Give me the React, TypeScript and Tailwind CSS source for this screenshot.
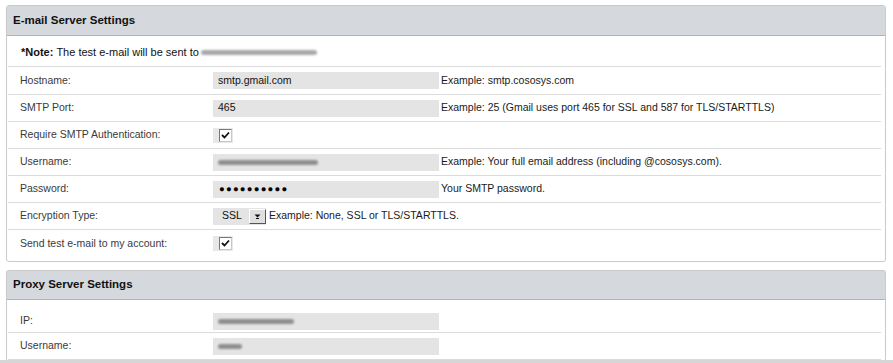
import React from "react";

const font = { fontFamily: '"Liberation Sans", Arial, sans-serif' };

function Blur({ w, tone = "#9a9a9a" }: { w: number; tone?: string }) {
  return (
    <span
      className="inline-block h-[5px] rounded-full blur-[1px] align-middle"
      style={{ width: w, background: tone }}
    />
  );
}

function Row({
  label,
  children,
  last,
  h = "h-[27px]",
}: {
  label: string;
  children?: React.ReactNode;
  last?: boolean;
  h?: string;
}) {
  return (
    <div className={`flex items-center ${h} ${last ? "" : "border-b border-[#dcdcdc]"}`}>
      <div className="w-[205px] shrink-0 pl-[12px] text-[#3a3a3a]">{label}</div>
      <div className="flex items-center">{children}</div>
    </div>
  );
}

function Input({ children }: { children?: React.ReactNode }) {
  return (
    <div className="flex h-[17px] w-[226px] items-center bg-[#e4e4e4] pl-[5px] text-[#111]">
      {children}
    </div>
  );
}

function Example({ children }: { children: React.ReactNode }) {
  return <span className="ml-[2px] text-[#1a1a1a]">{children}</span>;
}

function Checkbox() {
  return (
    <div className="flex h-[15px] w-[20px] items-center justify-end bg-[#e8e8e8] pr-[1px]">
      <div className="flex h-[13px] w-[13px] items-center justify-center border border-t-[#777] border-l-[#777] border-r-[#c8c8c8] border-b-[#c8c8c8] bg-white">
        <svg width="9" height="9" viewBox="0 0 9 9">
          <path d="M1 4 L3.5 6.5 L8 1.5" stroke="#111" strokeWidth="1.8" fill="none" />
        </svg>
      </div>
    </div>
  );
}

export default function App() {
  return (
    <div className="relative h-[363px] w-[893px] overflow-hidden bg-white text-[10.5px]" style={font}>
      <div className="pt-[5px] pl-[6px] pr-[7px]">
        {/* Panel 1 */}
        <div className="rounded-[3px] border border-[#c9c9c9]">
          <div className="flex h-[30px] items-center border-b border-[#b3b3b3] bg-[#d5d8dc] pl-[6px] text-[11.5px] font-bold text-[#111]">
            E-mail Server Settings
          </div>
          <div className="ml-[1px] mr-[4px] pb-[4px]">
            <div className="flex h-[31px] items-center border-b border-[#dcdcdc] pl-[13px] pt-[2px] text-[#111]">
              <span className="text-[11px] font-bold">*Note:</span>
              <span className="ml-[3px] text-[11px]">The test e-mail will be sent to</span>
              <span className="ml-[2px]">
                <Blur w={116} tone="#a8a8a8" />
              </span>
            </div>
            <Row label="Hostname:" h="h-[28px]">
              <Input>smtp.gmail.com</Input>
              <Example>Example: smtp.cososys.com</Example>
            </Row>
            <Row label="SMTP Port:">
              <Input>465</Input>
              <Example>Example: 25 (Gmail uses port 465 for SSL and 587 for TLS/STARTTLS)</Example>
            </Row>
            <Row label="Require SMTP Authentication:">
              <Checkbox />
            </Row>
            <Row label="Username:">
              <Input>
                <Blur w={100} tone="#8e8e8e" />
              </Input>
              <Example>Example: Your full email address (including @cososys.com).</Example>
            </Row>
            <Row label="Password:">
              <Input>
                <span className="pl-[1px] text-[9.5px] tracking-[1.2px] text-black">●●●●●●●●●●</span>
              </Input>
              <Example>Your SMTP password.</Example>
            </Row>
            <Row label="Encryption Type:">
              <div className="flex h-[17px] items-center bg-[#e4e4e4]">
                <span className="w-[36px] pl-[9px] text-[#111]">SSL</span>
                <div className="flex h-[15px] w-[17px] items-center justify-center border border-t-[#fff] border-l-[#fff] border-r-[#555] border-b-[#555] bg-[#e0e0e0]">
                  <svg width="9" height="7" viewBox="0 0 9 7">
                    <path d="M1.5 1.5 H7.5 L4.5 4.5 Z" fill="#111" />
                    <rect x="3" y="5" width="3" height="1" fill="#111" />
                  </svg>
                </div>
              </div>
              <span className="ml-[3px] text-[#1a1a1a]">Example: None, SSL or TLS/STARTTLS.</span>
            </Row>
            <Row label="Send test e-mail to my account:" last h="h-[27px]">
              <Checkbox />
            </Row>
          </div>
        </div>

        {/* Panel 2 */}
        <div className="mt-[8px] rounded-t-[3px] border border-b-0 border-[#c9c9c9]">
          <div className="flex h-[29px] items-center border-b border-[#b3b3b3] bg-[#d5d8dc] pl-[6px] text-[11.5px] font-bold text-[#111]">
            Proxy Server Settings
          </div>
          <div className="ml-[1px] mr-[4px]">
            <Row label="IP:" h="h-[33px] pt-[10px]">
              <Input>
                <Blur w={76} tone="#8e8e8e" />
              </Input>
            </Row>
            <Row label="Username:" h="h-[27px]">
              <Input>
                <Blur w={24} tone="#8e8e8e" />
              </Input>
            </Row>
          </div>
        </div>
      </div>
      <div className="absolute bottom-0 left-0 h-[3px] w-full bg-[#d6d6d6]" />
    </div>
  );
}
